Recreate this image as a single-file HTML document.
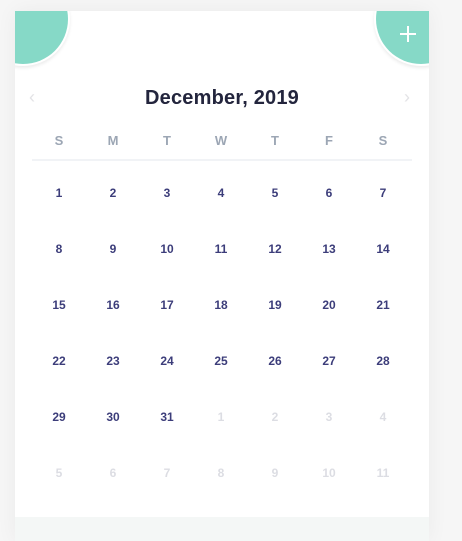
<!DOCTYPE html>
<html><head><style>
body{margin:0;width:462px;height:541px;background:#f6f6f6;overflow:hidden;font-family:"Liberation Sans",sans-serif;position:relative}
.card{position:absolute;left:15px;top:11px;width:414px;height:530px;background:#fff;overflow:hidden;box-shadow:0 0 20px rgba(0,0,0,.05)}
.foot{position:absolute;left:0;top:506px;width:414px;height:24px;background:#f4f7f6}
.c{position:absolute;width:90px;height:90px;border-radius:50%;background:#86d9c7;box-shadow:0 0 0 2px #fff,0 2px 3px 2px rgba(0,0,0,.08)}
.title{position:absolute;left:0;width:414px;top:76px;text-align:center;font-size:20px;font-weight:bold;color:#23253d;letter-spacing:.2px}
.arr{position:absolute;top:76px;color:#e3e3e6;font-size:18px}
.t{position:absolute;width:40px;margin-left:-20px;text-align:center;font-weight:bold;font-size:12px}
.h{color:#9ca6b4;font-size:13px}
.d{color:#3c3d7a}
.g{color:#dcdde3}
.line{position:absolute;left:17px;top:148px;width:380px;height:2px;background:#f1f3f6}
</style></head><body>
<div class="card">
<div class="c" style="left:-37px;top:-37px"></div>
<div class="c" style="left:361px;top:-37px"></div>
<svg style="position:absolute;left:383px;top:13px" width="20" height="20"><path d="M10 2V18M2 10H18" stroke="#fff" stroke-width="2"/></svg>
<div class="arr" style="left:14px">‹</div><div class="arr" style="left:389px">›</div>
<div class="title">December, 2019</div>
<div class="line"></div>
<div class="foot"></div>
<div id="g"></div>
</div>
<script>
var g=document.getElementById('g'),h='',H=['S','M','T','W','T','F','S'];
for(var i=0;i<7;i++)h+='<div class="t h" style="left:'+(44+54*i)+'px;top:122px">'+H[i]+'</div>';
for(var r=0;r<6;r++)for(var i=0;i<7;i++){var n=r*7+i+1,c='d';if(n>31){n-=31;c='g'}
h+='<div class="t '+c+'" style="left:'+(44+54*i)+'px;top:'+(175+56*r)+'px">'+n+'</div>';}
g.innerHTML=h;
</script>
</body></html>
